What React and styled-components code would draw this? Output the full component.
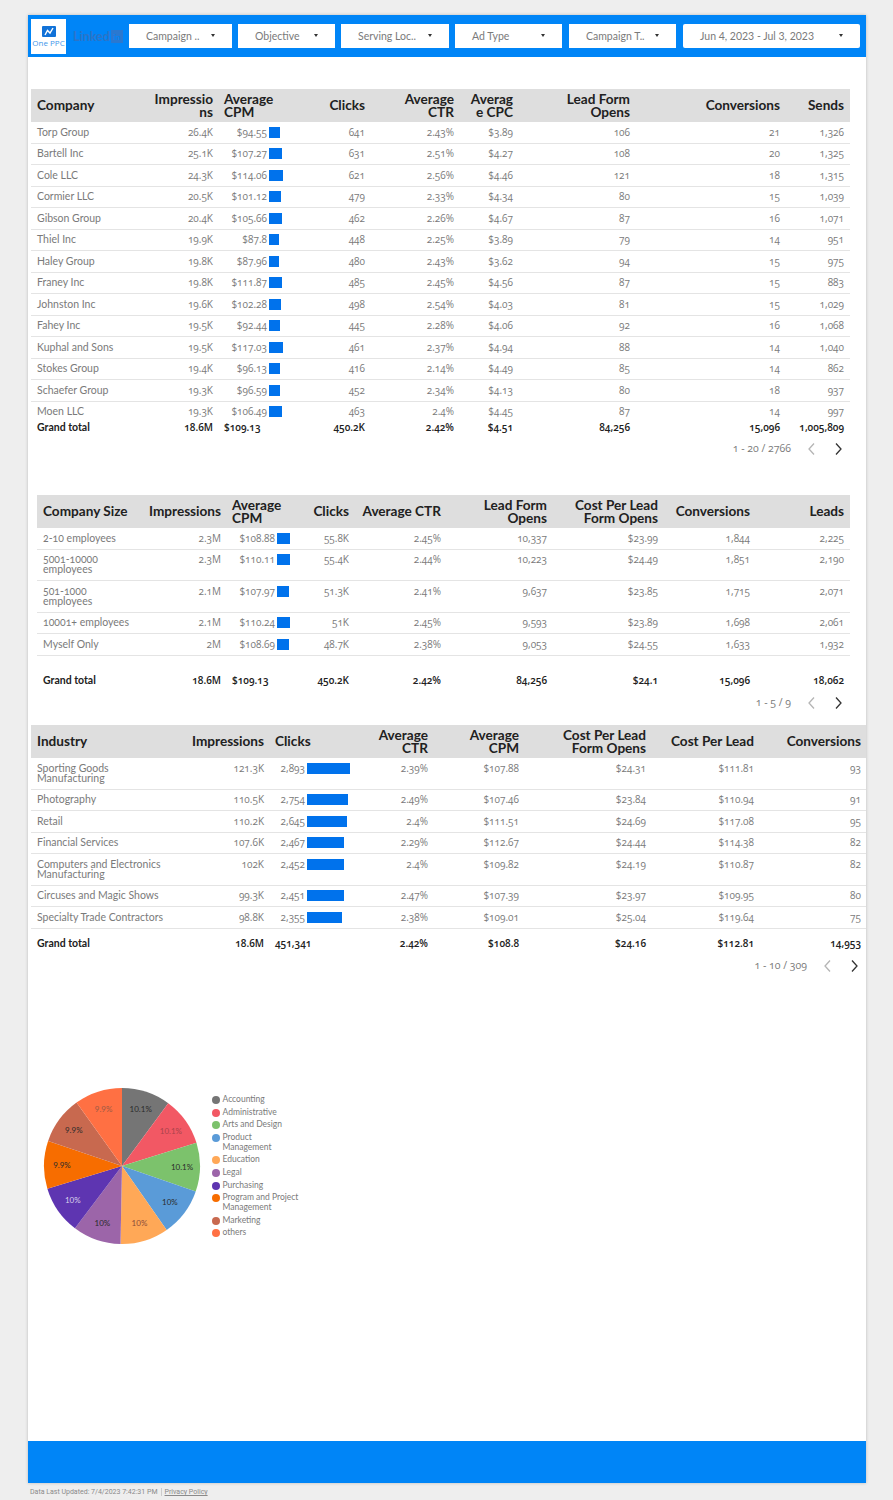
import React from "react";
import styled, { createGlobalStyle } from "styled-components";

const GlobalStyle = createGlobalStyle`
  html, body {
    margin: 0;
    padding: 0;
    background: #eeeeee;
  }
  body {
    font-family: "Lato", "Open Sans", sans-serif;
  }
`;

const numberFont = `"Open Sans", "Lato", sans-serif`;

const Page = styled.div`
  width: 893px;
  height: 1500px;
  padding: 15px 0 0 28px;
  box-sizing: border-box;
`;

const Canvas = styled.div`
  width: 838px;
  height: 1468px;
  background: #fff;
  box-shadow: 0 0 3px rgba(0, 0, 0, 0.22);
  display: flex;
  flex-direction: column;
`;

const TopBar = styled.header`
  height: 42px;
  background: #0085f7;
  display: flex;
  align-items: center;
  padding: 0 6px 0 3px;
  flex-shrink: 0;
`;

const LogoBox = styled.div`
  width: 35px;
  height: 35px;
  background: #fff;
  display: flex;
  flex-direction: column;
  align-items: center;
  padding-top: 7px;
  box-sizing: border-box;
  flex-shrink: 0;
`;

const LogoText = styled.span`
  font-family: "Open Sans", sans-serif;
  font-size: 8px;
  line-height: 10px;
  margin-top: 1px;
  color: #3f97ea;
  white-space: nowrap;
`;

const Brand = styled.div`
  width: 56px;
  margin-left: 7px;
  display: flex;
  align-items: center;
  color: #2b74c8;
  font-size: 12.5px;
  font-weight: 700;
  flex-shrink: 0;
`;

const BrandTag = styled.span`
  width: 12px;
  height: 13px;
  margin-left: 1px;
  font-size: 8px;
  line-height: 15px;
  text-align: center;
  background: #2a78d0;
  color: #0085f7;
`;

const Filter = styled.div`
  width: ${(p) => p.$width}px;
  height: 24px;
  margin-right: ${(p) => p.$gap}px;
  background: #fff;
  border-radius: ${(p) => (p.$round ? "2px" : "0")};
  display: flex;
  align-items: center;
  justify-content: space-between;
  padding: 0 17px 1px;
  box-sizing: border-box;
  font-size: 10.5px;
  color: #7a7a7a;
  flex-shrink: 0;
`;

const Caret = styled.i`
  width: 0;
  height: 0;
  border-left: 2.5px solid transparent;
  border-right: 2.5px solid transparent;
  border-top: 3px solid #333;
`;

const Head = styled.div`
  display: grid;
  grid-template-columns: ${(p) => p.$cols};
  height: 33px;
  align-items: center;
  background: #dedede;
  color: #212121;
  font-size: 13.6px;
  font-weight: 700;
  line-height: 12.5px;
`;

const HeadCell = styled.div`
  padding: 0 6px 0 ${(p) => (p.$tight ? 5 : 6)}px;
  text-align: ${(p) => (p.$left ? "left" : "right")};
  white-space: pre-line;
`;

const Body = styled.div`
  height: ${(p) => p.$height}px;
  overflow: hidden;
`;

const Row = styled.div`
  display: grid;
  grid-template-columns: ${(p) => p.$cols};
  box-sizing: border-box;
  padding: 4.5px 0 6px;
  border-bottom: 1px solid #e4e4e4;
  color: #7a7a7a;
  font-size: 10.5px;
  line-height: 10px;
`;

const Cell = styled.div`
  padding: 0 6px 0 ${(p) => (p.$tight ? 5 : 6)}px;
  text-align: ${(p) => (p.$left ? "left" : "right")};
  white-space: pre-line;
  font-family: ${(p) => (p.$label ? "inherit" : numberFont)};
  font-feature-settings: "onum";
  font-size: ${(p) => (p.$label ? "inherit" : "10px")};
`;

const Table = styled.section`
  width: ${(p) => p.$width}px;
  margin: ${(p) => p.$top}px 0 0 ${(p) => p.$left}px;
  flex-shrink: 0;

  ${HeadCell}:last-child, ${Cell}:last-child {
    padding-right: ${(p) => p.$tail}px;
  }
`;

const BarCell = styled.div`
  padding-left: 5px;
  display: flex;
  align-items: flex-start;
  height: 10px;
  font-family: ${numberFont};
  font-feature-settings: "onum";
  font-size: 10px;
`;

const BarValue = styled.span`
  width: ${(p) => p.$width}px;
  text-align: right;
  flex-shrink: 0;
`;

const Bar = styled.i`
  height: 11px;
  margin-left: 2px;
  background: #0072ec;
`;

const Total = styled.div`
  display: grid;
  grid-template-columns: ${(p) => p.$cols};
  height: ${(p) => p.$height}px;
  align-items: center;
  color: #212121;
  font-size: 10.5px;
  font-weight: 700;
  line-height: 10px;

  ${Cell}:not(:first-child) {
    font-weight: 600;
  }
`;

const Pager = styled.nav`
  height: ${(p) => p.$height}px;
  display: flex;
  align-items: center;
  justify-content: flex-end;
  padding-right: ${(p) => p.$right}px;
  color: #7a7a7a;
`;

const PagerText = styled.span`
  margin-bottom: 3px;
  font-family: ${numberFont};
  font-feature-settings: "onum";
  font-size: 10.5px;
`;

const PagerIcon = styled.svg`
  width: 9px;
  height: 14px;
  margin-left: ${(p) => p.$gap}px;
  fill: none;
  stroke: ${(p) => (p.$off ? "#b5b5b5" : "#333")};
  stroke-width: 1.3;
`;

const Chart = styled.section`
  display: flex;
  margin: 111px 0 0 15px;
`;

const PieSvg = styled.svg`
  width: 158px;
  height: 158px;
  flex-shrink: 0;
`;

const Legend = styled.ul`
  list-style: none;
  margin: 8px 0 0 11px;
  padding: 0;
  width: 92px;
  font-size: 8.5px;
  line-height: 9.5px;
  color: #7a7a7a;
`;

const LegendItem = styled.li`
  position: relative;
  padding: 0 0 3.2px 10.5px;
  white-space: pre-line;
`;

const Dot = styled.i`
  position: absolute;
  left: 0;
  top: 1px;
  width: 8px;
  height: 8px;
  border-radius: 50%;
  background: ${(p) => p.$color};
`;

const BottomBar = styled.div`
  height: 42px;
  margin-top: auto;
  background: #0085f7;
  flex-shrink: 0;
`;

const FooterNote = styled.footer`
  margin: 5px 0 0 2px;
  font-family: "Roboto", sans-serif;
  font-size: 7px;
  line-height: 9px;
  color: #8a8a8a;
`;

const PolicyLink = styled.a`
  margin-left: 3px;
  padding-left: 3px;
  border-left: 1px solid #ccc;
  color: #8a8a8a;
  text-decoration: underline;
`;

const companyCols = "117px 71px 81px 71px 89px 59px 117px 150px 64px";
const sizeCols = "105px 85px 73px 55px 92px 106px 111px 92px 94px";
const industryCols = "154px 85px 85px 79px 91px 127px 108px 106px";

const companyHead = ["Company", "Impressio\nns", "Average\nCPM", "Clicks", "Average\nCTR", "Averag\ne CPC", "Lead Form\nOpens", "Conversions", "Sends"];
const sizeHead = ["Company Size", "Impressions", "Average\nCPM", "Clicks", "Average CTR", "Lead Form\nOpens", "Cost Per Lead\nForm Opens", "Conversions", "Leads"];
const industryHead = ["Industry", "Impressions", "Clicks", "Average\nCTR", "Average\nCPM", "Cost Per Lead\nForm Opens", "Cost Per Lead", "Conversions"];

const companies = [
  ["Torp Group", "26.4K", "$94.55", 94.55, "641", "2.43%", "$3.89", "106", "21", "1,326"],
  ["Bartell Inc", "25.1K", "$107.27", 107.27, "631", "2.51%", "$4.27", "108", "20", "1,325"],
  ["Cole LLC", "24.3K", "$114.06", 114.06, "621", "2.56%", "$4.46", "121", "18", "1,315"],
  ["Cormier LLC", "20.5K", "$101.12", 101.12, "479", "2.33%", "$4.34", "80", "15", "1,039"],
  ["Gibson Group", "20.4K", "$105.66", 105.66, "462", "2.26%", "$4.67", "87", "16", "1,071"],
  ["Thiel Inc", "19.9K", "$87.8", 87.8, "448", "2.25%", "$3.89", "79", "14", "951"],
  ["Haley Group", "19.8K", "$87.96", 87.96, "480", "2.43%", "$3.62", "94", "15", "975"],
  ["Franey Inc", "19.8K", "$111.87", 111.87, "485", "2.45%", "$4.56", "87", "15", "883"],
  ["Johnston Inc", "19.6K", "$102.28", 102.28, "498", "2.54%", "$4.03", "81", "15", "1,029"],
  ["Fahey Inc", "19.5K", "$92.44", 92.44, "445", "2.28%", "$4.06", "92", "16", "1,068"],
  ["Kuphal and Sons", "19.5K", "$117.03", 117.03, "461", "2.37%", "$4.94", "88", "14", "1,040"],
  ["Stokes Group", "19.4K", "$96.13", 96.13, "416", "2.14%", "$4.49", "85", "14", "862"],
  ["Schaefer Group", "19.3K", "$96.59", 96.59, "452", "2.34%", "$4.13", "80", "18", "937"],
  ["Moen LLC", "19.3K", "$106.49", 106.49, "463", "2.4%", "$4.45", "87", "14", "997"],
];
const companyTotal = ["Grand total", "18.6M", "$109.13", "450.2K", "2.42%", "$4.51", "84,256", "15,096", "1,005,809"];

const sizes = [
  ["2-10 employees", "2.3M", "$108.88", 108.88, "55.8K", "2.45%", "10,337", "$23.99", "1,844", "2,225"],
  ["5001-10000\nemployees", "2.3M", "$110.11", 110.11, "55.4K", "2.44%", "10,223", "$24.49", "1,851", "2,190"],
  ["501-1000\nemployees", "2.1M", "$107.97", 107.97, "51.3K", "2.41%", "9,637", "$23.85", "1,715", "2,071"],
  ["10001+ employees", "2.1M", "$110.24", 110.24, "51K", "2.45%", "9,593", "$23.89", "1,698", "2,061"],
  ["Myself Only", "2M", "$108.69", 108.69, "48.7K", "2.38%", "9,053", "$24.55", "1,633", "1,932"],
];
const sizeTotal = ["Grand total", "18.6M", "$109.13", "450.2K", "2.42%", "84,256", "$24.1", "15,096", "18,062"];

const industries = [
  ["Sporting Goods\nManufacturing", "121.3K", "2,893", 2893, "2.39%", "$107.88", "$24.31", "$111.81", "93"],
  ["Photography", "110.5K", "2,754", 2754, "2.49%", "$107.46", "$23.84", "$110.94", "91"],
  ["Retail", "110.2K", "2,645", 2645, "2.4%", "$111.51", "$24.69", "$117.08", "95"],
  ["Financial Services", "107.6K", "2,467", 2467, "2.29%", "$112.67", "$24.44", "$114.38", "82"],
  ["Computers and Electronics\nManufacturing", "102K", "2,452", 2452, "2.4%", "$109.82", "$24.19", "$110.87", "82"],
  ["Circuses and Magic Shows", "99.3K", "2,451", 2451, "2.47%", "$107.39", "$23.97", "$109.95", "80"],
  ["Specialty Trade Contractors", "98.8K", "2,355", 2355, "2.38%", "$109.01", "$25.04", "$119.64", "75"],
];
const industryTotal = ["Grand total", "18.6M", "451,341", "2.42%", "$108.8", "$24.16", "$112.81", "14,953"];

const slices = [
  { label: "Accounting", pct: 10.1, text: "10.1%", color: "#757575", ink: "#2b2b2b" },
  { label: "Administrative", pct: 10.1, text: "10.1%", color: "#f25864", ink: "#a8434b" },
  { label: "Arts and Design", pct: 10.1, text: "10.1%", color: "#7cc26c", ink: "#2b2b2b" },
  { label: "Product\nManagement", pct: 10, text: "10%", color: "#5a9bd8", ink: "#2b2b2b" },
  { label: "Education", pct: 10, text: "10%", color: "#ffa857", ink: "#8a4b3a" },
  { label: "Legal", pct: 10, text: "10%", color: "#9c65a9", ink: "#2b2b2b" },
  { label: "Purchasing", pct: 10, text: "10%", color: "#5e35b1", ink: "#d9d2ea" },
  { label: "Program and Project\nManagement", pct: 9.9, text: "9.9%", color: "#f76d00", ink: "#2b2b2b" },
  { label: "Marketing", pct: 9.9, text: "9.9%", color: "#c8694f", ink: "#2b2b2b" },
  { label: "others", pct: 9.9, text: "9.9%", color: "#ff7043", ink: "#9c5a45" },
];

function polar(r, pct) {
  const a = (pct / 100) * Math.PI * 2;
  return [79 + r * Math.sin(a), 79 - r * Math.cos(a)];
}

const Pie = () => {
  let from = 0;
  return (
    <PieSvg viewBox="0 0 158 158">
      {slices.map((s) => {
        const start = polar(78, from);
        const end = polar(78, from + s.pct);
        const mid = polar(60, from + s.pct / 2);
        from += s.pct;
        return (
          <g key={s.label}>
            <path d={`M79 79L${start[0]} ${start[1]}A78 78 0 0 1 ${end[0]} ${end[1]}Z`} fill={s.color} />
            <text x={mid[0]} y={mid[1] + 3} textAnchor="middle" fontSize="8" fill={s.ink}>
              {s.text}
            </text>
          </g>
        );
      })}
    </PieSvg>
  );
};

const PagerBlock = ({ text, height, right }) => (
  <Pager $height={height} $right={right}>
    <PagerText>{text}</PagerText>
    <PagerIcon $off $gap={16} viewBox="0 0 9 14">
      <path d="M7 1.5L2 7l5 5.5" />
    </PagerIcon>
    <PagerIcon $gap={18} viewBox="0 0 9 14">
      <path d="M2 1.5L7 7l-5 5.5" />
    </PagerIcon>
  </Pager>
);

const Cells = ({ row, barIndex, valueWidth, scale }) =>
  row.map((value, i) => {
    if (i === barIndex + 1) return null;
    if (i === barIndex)
      return (
        <BarCell key={i}>
          <BarValue $width={valueWidth}>{value}</BarValue>
          <Bar style={{ width: row[i + 1] * scale }} />
        </BarCell>
      );
    return (
      <Cell key={i} $left={i === 0} $label={i === 0}>
        {value}
      </Cell>
    );
  });

const DataTable = ({ cols, head, rows, total, valueWidth, scale, bodyHeight, totalHeight }) => (
  <>
    <Head $cols={cols}>
      {head.map((h, i) => (
        <HeadCell key={h} $left={i === 0 || i === 2} $tight={i === 2}>
          {h}
        </HeadCell>
      ))}
    </Head>
    <Body $height={bodyHeight}>
      {rows.map((row) => (
        <Row key={row[0]} $cols={cols}>
          <Cells row={row} barIndex={2} valueWidth={valueWidth} scale={scale} />
        </Row>
      ))}
    </Body>
    <Total $cols={cols} $height={totalHeight}>
      {total.map((v, i) => (
        <Cell key={i} $left={i === 0 || i === 2} $tight={i === 2} $label={i === 0}>
          {v}
        </Cell>
      ))}
    </Total>
  </>
);

export default function App() {
  return (
    <Page>
      <GlobalStyle />
      <Canvas>
        <TopBar>
          <LogoBox>
            <svg width="14" height="11" viewBox="0 0 14 11">
              <rect width="14" height="11" rx="1" fill="#1172d8" />
              <path d="M3 9l2.5-4.5L8 7l3-5" fill="none" stroke="#fff" strokeWidth="1.4" />
            </svg>
            <LogoText>One PPC</LogoText>
          </LogoBox>
          <Brand>
            Linked
            <BrandTag>in</BrandTag>
          </Brand>
          <Filter $width={103} $gap={6}>Campaign ..<Caret /></Filter>
          <Filter $width={97} $gap={6}>Objective<Caret /></Filter>
          <Filter $width={108} $gap={6}>Serving Loc..<Caret /></Filter>
          <Filter $width={107} $gap={7}>Ad Type<Caret /></Filter>
          <Filter $width={107} $gap={7}>Campaign T..<Caret /></Filter>
          <Filter $width={177} $gap={0} $round>Jun 4, 2023 - Jul 3, 2023<Caret /></Filter>
        </TopBar>

        <Table $width={819} $left={3} $top={32} $tail={6}>
          <DataTable
            cols={companyCols}
            head={companyHead}
            rows={companies}
            total={companyTotal}
            valueWidth={43}
            scale={0.119}
            bodyHeight={298}
            totalHeight={13}
          />
          <PagerBlock text="1 - 20 / 2766" height={32} right={7} />
        </Table>

        <Table $width={813} $left={9} $top={30} $tail={6}>
          <DataTable
            cols={sizeCols}
            head={sizeHead}
            rows={sizes}
            total={sizeTotal}
            valueWidth={43}
            scale={0.115}
            bodyHeight={139}
            totalHeight={26}
          />
          <PagerBlock text="1 - 5 / 9" height={20} right={7} />
        </Table>

        <Table $width={835} $left={3} $top={12} $tail={5}>
          <DataTable
            cols={industryCols}
            head={industryHead}
            rows={industries}
            total={industryTotal}
            valueWidth={30}
            scale={0.015}
            bodyHeight={172}
            totalHeight={26}
          />
          <PagerBlock text="1 - 10 / 309" height={20} right={7} />
        </Table>

        <Chart>
          <Pie />
          <Legend>
            {slices.map((s) => (
              <LegendItem key={s.label}>
                <Dot $color={s.color} />
                {s.label}
              </LegendItem>
            ))}
          </Legend>
        </Chart>

        <BottomBar />
      </Canvas>
      <FooterNote>
        Data Last Updated: 7/4/2023 7:42:31 PM
        <PolicyLink href="#">Privacy Policy</PolicyLink>
      </FooterNote>
    </Page>
  );
}
